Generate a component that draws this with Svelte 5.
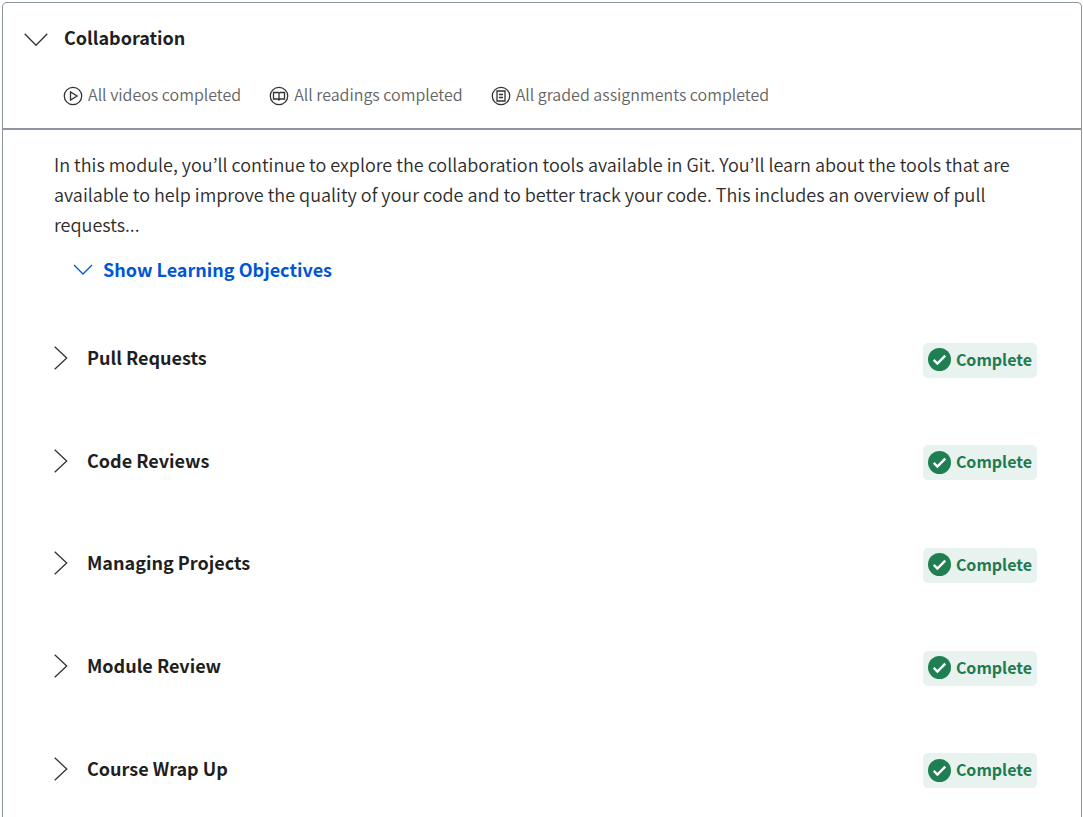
<script>
  const lessons = ['Pull Requests', 'Code Reviews', 'Managing Projects', 'Module Review', 'Course Wrap Up'];
  const statuses = [
    { icon: 'play', label: 'All videos completed' },
    { icon: 'book', label: 'All readings completed' },
    { icon: 'quiz', label: 'All graded assignments completed' }
  ];
</script>

<main class="module">
  <header>
    <h2>
      <button class="module-toggle" aria-expanded="true">
        <svg width="24" height="14" viewBox="0 0 24 14" aria-hidden="true"><path d="M.7 .7 12 12.2 23.300 .7" /></svg>
        <span>Collaboration</span>
      </button>
    </h2>
    <ul class="statuses">
      {#each statuses as status}
        <li>
          <svg width="20" height="20" viewBox="0 0 20 20" aria-hidden="true">
            <circle cx="10" cy="10" r="8.700" />
            {#if status.icon === 'play'}
              <path d="M7.500 6v8l6.500-4z" />
            {:else if status.icon === 'book'}
              <path d="M4.500 6.500H9l1 .8 1-.8h4.500v6.500H11l-1 1-1-1H4.500zM10 7.300V14" />
            {:else}
              <path d="M6 5h8v10H6zM8 8.500h4M8 11.500h4" />
            {/if}
          </svg>
          <span>{status.label}</span>
        </li>
      {/each}
    </ul>
  </header>

  <section class="content">
    <p>In this module, you’ll continue to explore the collaboration tools available in Git. You’ll learn about the tools that are available to help improve the quality of your code and to better track your code. This includes an overview of pull requests...</p>
    <button class="objectives" aria-expanded="false">
      <svg width="20" height="12" viewBox="0 0 20 12" aria-hidden="true"><path d="M1 1 10 10 19 1" /></svg>
      <span>Show Learning Objectives</span>
    </button>

    <ul class="lessons">
      {#each lessons as lesson}
        <li>
          <button class="lesson" aria-expanded="false">
            <svg width="14" height="24" viewBox="0 0 14 24" aria-hidden="true"><path d="M.7 .7 12.700 12 .7 23.300" /></svg>
            <span>{lesson}</span>
          </button>
          <span class="badge">
            <svg width="23" height="23" viewBox="0 0 24 24" aria-hidden="true">
              <circle cx="12" cy="12" r="12" />
              <path d="m6 12.500 3.800 3.700L18 8" />
            </svg>
            <span>Complete</span>
          </span>
        </li>
      {/each}
    </ul>
  </section>
</main>

<style>
  :global(body) {
    background: #fff;
  }
  .module {
    margin: 2px 1px 0 2px;
    border: 1px solid #8f959c;
    border-bottom: 0;
    border-radius: 5px 5px 0 0;
    font-family: "Source Sans Pro", "Noto Sans CJK KR", sans-serif;
    font-size: 18px;
    line-height: 30px;
    color: #1f1f1f;
  }
  h2, p, ul {
    margin: 0;
    padding: 0;
  }
  ul {
    list-style: none;
  }
  svg {
    flex: none;
    fill: none;
    stroke: #333;
    stroke-width: 1.300;
  }
  button {
    display: flex;
    align-items: center;
    padding: 0;
    border: 0;
    background: none;
    color: inherit;
    font: inherit;
    font-weight: 700;
    text-align: left;
    cursor: pointer;
  }
  button span,
  .statuses span,
  .badge span {
    padding-bottom: 2px;
    line-height: 28px;
  }
  header {
    padding: 20px 20px 18px 21px;
    border-bottom: 2px solid #8f959c;
  }
  h2 {
    font-size: inherit;
  }
  .module-toggle {
    gap: 16px;
  }
  .module-toggle svg {
    padding-top: 3px;
  }
  .statuses {
    display: flex;
    flex-wrap: wrap;
    column-gap: 28px;
    margin-top: 27px;
    padding-left: 39px;
    font-size: 16px;
    font-weight: 350;
    color: #636363;
  }
  .statuses li {
    display: flex;
    align-items: center;
    gap: 5px;
  }
  .statuses svg {
    padding-top: 1px;
  }
  .content {
    padding: 19px 44px 0 51px;
  }
  p {
    color: #2b2b2b;
    font-weight: 350;
  }
  .objectives {
    gap: 10px;
    margin: 16px 0 0 19px;
    color: #0056d2;
  }
  .objectives svg {
    stroke: #0056d2;
  }
  .lessons {
    display: grid;
    grid-auto-rows: 1fr;
    min-height: 513px;
    margin-top: 24px;
  }
  .lessons li {
    display: flex;
    align-items: center;
    justify-content: space-between;
  }
  .lesson {
    gap: 19px;
    padding-bottom: 4px;
  }
  .badge {
    display: flex;
    align-items: center;
    gap: 5px;
    padding: 2px 5px 3px;
    border-radius: 5px;
    background: #e8f2ee;
    color: #1f7a50;
    font-size: 16px;
    font-weight: 700;
  }
  .badge circle {
    fill: #1f7f52;
    stroke: none;
  }
  .badge path {
    stroke: #fff;
    stroke-width: 2.500;
  }
</style>
